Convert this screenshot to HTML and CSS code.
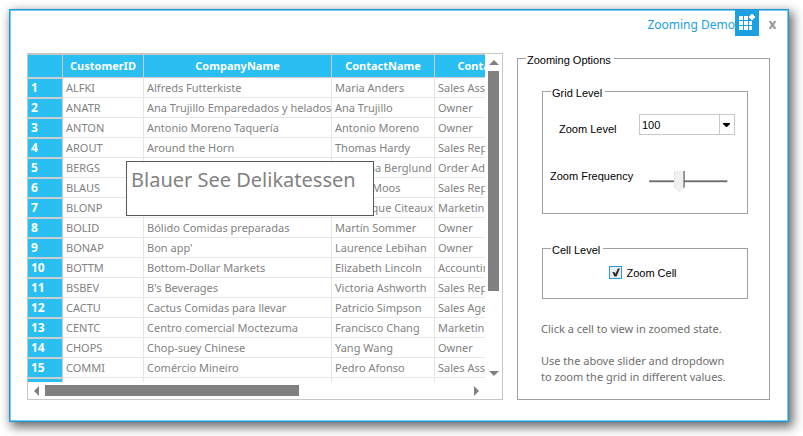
FILE: index.html
```html
<!DOCTYPE html>
<html lang="en">
<head>
<meta charset="utf-8">
<title>Zooming Demo</title>
<link rel="stylesheet" href="styles.css">
</head>
<body>
<main class="window">
  <header class="titlebar">
    <h1 class="title">Zooming Demo</h1>
    <svg class="logo" viewBox="0 0 24 26" aria-hidden="true">
      <rect width="24" height="26" fill="#1ba1e2"/>
      <path fill="#fff" d="M4 6h4v4H4zM9 6h4v4H9zM4 11h4v4H4zM9 11h4v4H9zM14 11h3v4h-3zM4 16h4v4H4zM9 16h4v4H9zM14 16h3v4h-3zM16 4h2v1h1v1h1v2h-1v1h-1v1h-2V9h-1V8h-1V6h1V5h1z"/>
    </svg>
    <button class="close" type="button" aria-label="Close">
      <svg viewBox="0 0 7 8"><path d="M0 0h2l1.500 2L5 0h2v1L5 4l2 3v1H5L3.500 6 2 8H0V7l2-3-2-3z" fill="#a0a0a0"/></svg>
    </button>
  </header>

  <div class="content">
    <section class="grid">
      <div class="viewport">
        <table class="data">
          <colgroup><col class="c-num"><col class="c-id"><col class="c-company"><col class="c-name"><col class="c-title"></colgroup>
          <thead>
            <tr><th></th><th>CustomerID</th><th>CompanyName</th><th>ContactName</th><th>ContactTitle</th></tr>
          </thead>
          <tbody>
            <tr><th>1</th><td>ALFKI</td><td>Alfreds Futterkiste</td><td>Maria Anders</td><td>Sales Associate</td></tr>
            <tr><th>2</th><td>ANATR</td><td>Ana Trujillo Emparedados y helados</td><td>Ana Trujillo</td><td>Owner</td></tr>
            <tr><th>3</th><td>ANTON</td><td>Antonio Moreno Taquería</td><td>Antonio Moreno</td><td>Owner</td></tr>
            <tr><th>4</th><td>AROUT</td><td>Around the Horn</td><td>Thomas Hardy</td><td>Sales Representative</td></tr>
            <tr><th>5</th><td>BERGS</td><td></td><td>Christina Berglund</td><td>Order Administrator</td></tr>
            <tr><th>6</th><td>BLAUS</td><td></td><td>Hanna Moos</td><td>Sales Representative</td></tr>
            <tr><th>7</th><td>BLONP</td><td></td><td>Frédérique Citeaux</td><td>Marketing Manager</td></tr>
            <tr><th>8</th><td>BOLID</td><td>Bólido Comidas preparadas</td><td>Martín Sommer</td><td>Owner</td></tr>
            <tr><th>9</th><td>BONAP</td><td>Bon app'</td><td>Laurence Lebihan</td><td>Owner</td></tr>
            <tr><th>10</th><td>BOTTM</td><td>Bottom-Dollar Markets</td><td>Elizabeth Lincoln</td><td>Accounting Manager</td></tr>
            <tr><th>11</th><td>BSBEV</td><td>B's Beverages</td><td>Victoria Ashworth</td><td>Sales Representative</td></tr>
            <tr><th>12</th><td>CACTU</td><td>Cactus Comidas para llevar</td><td>Patricio Simpson</td><td>Sales Agent</td></tr>
            <tr><th>13</th><td>CENTC</td><td>Centro comercial Moctezuma</td><td>Francisco Chang</td><td>Marketing Manager</td></tr>
            <tr><th>14</th><td>CHOPS</td><td>Chop-suey Chinese</td><td>Yang Wang</td><td>Owner</td></tr>
            <tr><th>15</th><td>COMMI</td><td>Comércio Mineiro</td><td>Pedro Afonso</td><td>Sales Associate</td></tr>
            <tr><th></th><td></td><td></td><td></td><td></td></tr>
          </tbody>
        </table>
      </div>
      <div class="vbar">
        <button type="button" class="arrow" aria-label="Scroll up"><svg viewBox="0 0 10 5" width="10" height="5"><path d="M5 0l5 5H0z"/></svg></button>
        <div class="track"><div class="thumb"></div><div class="rest"></div></div>
        <button type="button" class="arrow" aria-label="Scroll down"><svg viewBox="0 0 10 5" width="10" height="5"><path d="M0 0h10L5 5z"/></svg></button>
      </div>
      <div class="hbar">
        <button type="button" class="arrow" aria-label="Scroll left"><svg viewBox="0 0 5 10" width="5" height="10"><path d="M5 0v10L0 5z"/></svg></button>
        <div class="track"><div class="thumb"></div><div class="rest"></div></div>
        <button type="button" class="arrow" aria-label="Scroll right"><svg viewBox="0 0 5 10" width="5" height="10"><path d="M0 0l5 5-5 5z"/></svg></button>
      </div>
      <div class="zoomed-cell">Blauer See Delikatessen</div>
    </section>

    <fieldset class="options">
      <legend>Zooming Options</legend>
      <fieldset class="group grid-level">
        <legend>Grid Level</legend>
        <div class="row level-row">
          <label for="level">Zoom Level</label>
          <div class="combo">
            <select id="level"><option>50</option><option selected>100</option><option>150</option></select>
            <span class="combo-arrow"><svg viewBox="0 0 7 4" width="7" height="4"><path d="M0 0h7v1L4 4H3L0 1z"/></svg></span>
          </div>
        </div>
        <div class="row freq-row">
          <label for="freq">Zoom Frequency</label>
          <input id="freq" class="slider" type="range" min="0" max="100" value="36">
        </div>
      </fieldset>
      <fieldset class="group cell-level">
        <legend>Cell Level</legend>
        <label class="check"><input type="checkbox" checked>Zoom Cell</label>
      </fieldset>
      <div class="help">
        <p>Click a cell to view in zoomed state.</p>
        <p>Use the above slider and dropdown<br>to zoom the grid in different values.</p>
      </div>
    </fieldset>
  </div>
</main>
</body>
</html>
```

FILE: styles.css
```css
* { box-sizing: border-box; }

body {
  margin: 0;
  height: 100vh;
  padding: 9px 14px 14px 9px;
  background: #fff;
  overflow: hidden;
  font: 11px/16px "Liberation Sans", Arial, sans-serif;
  color: #000;
}

button {
  padding: 0;
  border: 0;
  background: none;
}

svg { display: block; }

.window {
  display: flex;
  flex-direction: column;
  height: 100%;
  padding: 0 18px 21px 17px;
  background: #fff;
  border: 1px solid #1b98d8;
  box-shadow: inset 0 0 0 1px #7fcbf0, 3px 4px 10px 1px rgba(0, 0, 0, 0.6);
}

.titlebar {
  display: flex;
  justify-content: flex-end;
  height: 26px;
  margin-bottom: 17px;
}

.title {
  margin: 0;
  padding-top: 7px;
  font: 12px/16px "Noto Sans", "Segoe UI", sans-serif;
  color: #1ba1e2;
}

.logo {
  width: 24px;
  height: 26px;
}

.close { margin: 4px -6px 0 10px; }
.close svg { width: 7px; height: 8px; }

.content {
  flex: 1;
  min-height: 0;
  display: grid;
  grid-template: minmax(0, 1fr) / 476fr 253fr;
  gap: 14px;
}

/* Data grid */

.grid {
  position: relative;
  display: grid;
  grid-template: minmax(0, 1fr) 17px / minmax(0, 1fr) 17px;
  min-height: 0;
  border: 1px solid #c6c6c6;
}

.viewport {
  overflow: hidden;
  border-top: 1px solid #c6c6c6;
}

.data {
  table-layout: fixed;
  width: 520px;
  border-spacing: 0;
  font: 11px/16px "Noto Sans", "Segoe UI", sans-serif;
  color: #828282;
}

.c-num { width: 35px; }
.c-id { width: 81px; }
.c-company { width: 188px; }
.c-name { width: 103px; }
.c-title { width: 113px; }

.data th,
.data td {
  height: 20px;
  padding: 0 3px;
  text-align: left;
  white-space: nowrap;
  border-right: 1px solid #e6e6e6;
  border-bottom: 1px solid #e6e6e6;
}

.data th {
  background: #29bff2;
  color: #fff;
  border-color: #cdcdcd;
}

.data thead th {
  height: 23px;
  text-align: center;
}

.data tbody th {
  font-size: 12px;
  border-top: 1px solid #cdcdcd;
}

.vbar,
.hbar,
.track { display: flex; }

.vbar,
.vbar .track { flex-direction: column; }

.track { flex: 1; }

.hbar { grid-column: 1; }

.arrow {
  display: flex;
  align-items: center;
  justify-content: center;
  width: 17px;
  height: 17px;
}

.arrow path { fill: #808080; }

.thumb { background: #808080; }

.vbar .thumb { flex: 221; width: 11px; margin-left: 3px; }
.vbar .rest { flex: 74; }
.hbar .thumb { flex: 254; height: 11px; margin-top: 3px; }
.hbar .rest { flex: 169; }

.zoomed-cell {
  position: absolute;
  left: 98px;
  top: 107px;
  width: 248px;
  height: 55px;
  padding: 4px;
  background: #fff;
  border: 1px solid #5a5a5a;
  font: 20px/28px "Noto Sans", "Segoe UI", sans-serif;
  color: #828282;
  white-space: nowrap;
}

/* Options panel */

fieldset {
  min-width: 0;
  margin: 0;
  border: 1px solid #a0a0a0;
}

legend {
  padding: 3px 3px 0 1px;
  line-height: 12px;
}

.options {
  margin-top: -2px;
  padding: 18px 21px 0 24px;
}
.options > legend { margin-left: -16px; }

.group { padding: 0; }
.group legend { margin-left: 8px; }

.row {
  display: flex;
  justify-content: space-between;
}

.grid-level {
  height: 130px;
  margin-bottom: 27px;
}

.level-row { padding: 15px 12px 0 16px; }
.level-row label { padding-top: 7px; }
.freq-row { padding: 31px 19px 0 7px; }

.combo {
  position: relative;
  width: 96px;
  height: 21px;
}

.combo select {
  appearance: none;
  width: 100%;
  height: 100%;
  padding: 0 2px;
  border: 1px solid #c8c8c8;
  border-radius: 0;
  background: #fff;
  font: inherit;
  color: #000;
}

.combo-arrow {
  position: absolute;
  top: 1px;
  right: 1px;
  bottom: 1px;
  display: flex;
  align-items: center;
  width: 15px;
  padding-left: 3px;
  border-left: 1px solid #c8c8c8;
  pointer-events: none;
}

.slider {
  appearance: none;
  width: 79px;
  height: 22px;
  margin: 2px 0 0;
  background: none;
}

.slider::-webkit-slider-runnable-track {
  height: 3px;
  border: 1px solid;
  border-color: #a0a0a0 #e3e3e3 #e3e3e3 #a0a0a0;
  background: #696969;
}

.slider::-webkit-slider-thumb {
  appearance: none;
  width: 11px;
  height: 22px;
  margin-top: -10px;
  background: linear-gradient(90deg, #e3e3e3 1px, #f0f0f0 1px, #f0f0f0 9px, #a0a0a0 9px, #a0a0a0 10px, #696969 10px);
  clip-path: polygon(0 0, 100% 0, 100% 75%, 50% 100%, 0 75%);
}

.cell-level { height: 58px; }

.check {
  display: flex;
  justify-content: center;
  gap: 4px;
  padding: 9px 4px 0 0;
}

.check input {
  appearance: none;
  width: 13px;
  height: 13px;
  margin: 1px 0 0;
  border: 1px solid #1ba1e2;
  background: #ececec;
}

.check input:checked::after {
  content: "";
  display: block;
  width: 11px;
  height: 11px;
  background: #2d2d2d;
  clip-path: polygon(18% 46%, 36% 46%, 45% 62%, 68% 14%, 86% 14%, 56% 86%, 36% 86%);
}

.help {
  margin: 22px 0 0 -1px;
  font: 11px/16px "Noto Sans", "Segoe UI", sans-serif;
  color: #6e6e6e;
  white-space: nowrap;
}

.help p { margin: 0 0 16px; }
```
